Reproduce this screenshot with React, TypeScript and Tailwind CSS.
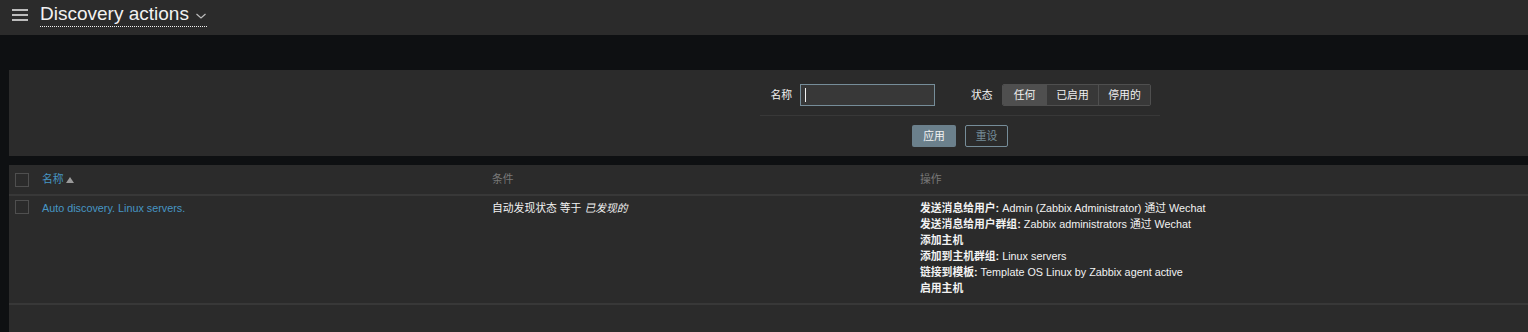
import React from 'react';

const font = { fontFamily: '"Liberation Sans", Arial, "Noto Sans CJK SC", sans-serif' };

const Checkbox = () => (
  <span className="block h-[14px] w-[14px] border border-[#4f4f4f] bg-[#2b2b2b]" />
);

const operations: { label: string; value?: string }[] = [
  { label: '发送消息给用户:', value: ' Admin (Zabbix Administrator) 通过 Wechat' },
  { label: '发送消息给用户群组:', value: ' Zabbix administrators 通过 Wechat' },
  { label: '添加主机' },
  { label: '添加到主机群组:', value: ' Linux servers' },
  { label: '链接到模板:', value: ' Template OS Linux by Zabbix agent active' },
  { label: '启用主机' },
];

export default function App() {
  return (
    <div className="min-h-[332px] bg-[#0e1012] text-[10.8px] text-[#f2f2f2]" style={font}>
      {/* page header */}
      <header className="flex h-[35px] items-center bg-[#2b2b2b] pl-[12px]">
        <svg width="16" height="12" viewBox="0 0 16 12" className="mb-[5px]" aria-hidden="true">
          <rect x="0" y="0" width="16" height="2" fill="#bcbcbc" />
          <rect x="0" y="5" width="16" height="2" fill="#bcbcbc" />
          <rect x="0" y="10" width="16" height="2" fill="#bcbcbc" />
        </svg>
        <h1 className="ml-[12px] mb-[6px] flex items-center border-b border-dotted border-[#f2f2f2] text-[19px] leading-[24px]">
          Discovery actions
          <svg width="12" height="8" viewBox="0 0 12 8" className="ml-[6px] mt-[4px]" aria-hidden="true">
            <path d="M1.5 2l4.5 4 4.5-4" fill="none" stroke="#bcbcbc" strokeWidth="1.2" />
          </svg>
        </h1>
      </header>

      <main className="pl-[9px] pt-[35px]">
        {/* filter */}
        <section className="bg-[#2b2b2b] pb-[9px] pt-[14px]">
          <div className="ml-[751px] w-[400px]">
            <div className="flex h-[22px] items-center whitespace-nowrap">
              <label className="w-[32px] text-right">名称</label>
              <div className="ml-[8px] flex h-[22px] w-[135px] items-center border border-[#768d99] bg-[#383838] pl-[4px]">
                <span className="h-[14px] w-px bg-[#f2f2f2]" />
              </div>
              <label className="ml-[36px] w-[22px]">状态</label>
              <div className="ml-[9px] flex h-[22px] overflow-hidden rounded-[2px] border border-[#4f4f4f]">
                <span className="flex w-[43px] items-center justify-center bg-[#4f4f4f]">任何</span>
                <span className="flex w-[52px] items-center justify-center border-l border-[#4f4f4f] bg-[#383838]">已启用</span>
                <span className="flex w-[52px] items-center justify-center border-l border-[#4f4f4f] bg-[#383838]">停用的</span>
              </div>
            </div>
            <div className="mt-[9px] border-t border-[#383838]" />
            <div className="mt-[9px] flex justify-center gap-[9px]">
              <button className="h-[22px] w-[44px] rounded-[2px] bg-[#6b808c] text-[#f2f2f2]">应用</button>
              <button className="h-[22px] w-[43px] rounded-[2px] border border-[#768d99] text-[#768d99]">重设</button>
            </div>
          </div>
        </section>

        {/* list */}
        <section className="mt-[9px] min-h-[167px] bg-[#2b2b2b]">
          <div className="grid h-[31px] grid-cols-[33px_450px_428px_1fr] items-center border-b-2 border-[#383838]">
            <div className="pl-[6px]">
              <Checkbox />
            </div>
            <div className="flex items-center text-[#4796c4]">
              名称
              <svg width="8" height="6" viewBox="0 0 8 6" className="ml-[2px]" aria-hidden="true">
                <path d="M0 6L4 0l4 6z" fill="#9a9a9a" />
              </svg>
            </div>
            <div className="text-[#787878]">条件</div>
            <div className="text-[#787878]">操作</div>
          </div>

          <div className="grid grid-cols-[33px_450px_428px_1fr] border-b-2 border-[#383838] pb-[7px] pt-[4px] leading-[16px]">
            <div className="pl-[6px]">
              <Checkbox />
            </div>
            <div className="text-[#4796c4]">Auto discovery. Linux servers.</div>
            <div>
              自动发现状态 等于 <em>已发现的</em>
            </div>
            <div>
              {operations.map((op) => (
                <div key={op.label}>
                  <b>{op.label}</b>
                  {op.value}
                </div>
              ))}
            </div>
          </div>
        </section>
      </main>
    </div>
  );
}
